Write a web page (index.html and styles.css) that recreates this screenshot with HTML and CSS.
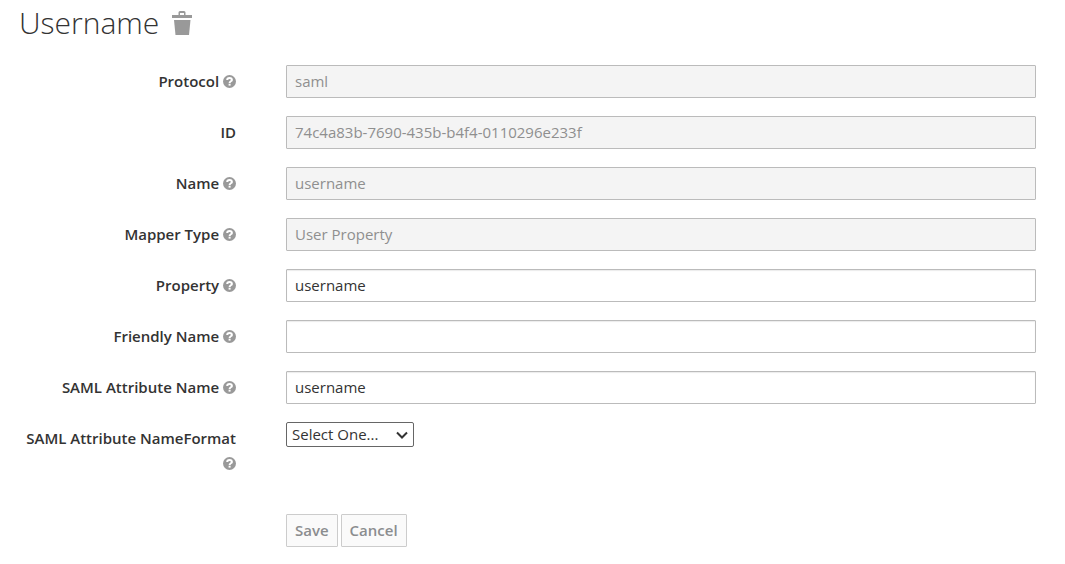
FILE: index.html
```html
<!DOCTYPE html>
<html lang="en">
<head>
  <meta charset="UTF-8">
  <meta name="viewport" content="width=device-width, initial-scale=1">
  <title>Username</title>
  <link rel="stylesheet" href="styles.css">
</head>
<body>

<!-- shared icons -->
<svg class="sprite" aria-hidden="true">
  <symbol id="help" viewBox="0 0 13 13">
    <circle cx="6.5" cy="6.5" r="6.5" fill="#999"/>
    <path d="M4.2 5.1C4.2 3.6 5.2 3 6.5 3S8.900 3.700 8.900 4.900C8.900 6.300 6.600 6.200 6.600 7.900" fill="none" stroke="#fff" stroke-width="2"/>
    <rect x="5.600" y="8.700" width="2" height="1.900" fill="#fff"/>
  </symbol>
</svg>

<main>
  <h1>
    Username
    <button class="delete" type="button" aria-label="Delete">
      <svg width="20" height="24" viewBox="0 0 20 24" fill="#999">
        <path d="M6.500 4V1.500Q6.500 0 8 0H12Q13.500 0 13.500 1.500V4H20V7H0V4ZM8 4H12V2H8Z" fill-rule="evenodd"/>
        <path d="M2 9H18.500L17 24H3.500Z"/>
      </svg>
    </button>
  </h1>

  <form>
    <div class="row">
      <label for="protocol">Protocol <svg class="help"><use href="#help"/></svg></label>
      <input type="text" id="protocol" value="saml" disabled>
    </div>
    <div class="row">
      <label for="mapperId">ID</label>
      <input type="text" id="mapperId" value="74c4a83b-7690-435b-b4f4-0110296e233f" disabled>
    </div>
    <div class="row">
      <label for="name">Name <svg class="help"><use href="#help"/></svg></label>
      <input type="text" id="name" value="username" disabled>
    </div>
    <div class="row">
      <label for="mapperType">Mapper Type <svg class="help"><use href="#help"/></svg></label>
      <input type="text" id="mapperType" value="User Property" disabled>
    </div>
    <div class="row">
      <label for="property">Property <svg class="help"><use href="#help"/></svg></label>
      <input type="text" id="property" value="username">
    </div>
    <div class="row">
      <label for="friendlyName">Friendly Name <svg class="help"><use href="#help"/></svg></label>
      <input type="text" id="friendlyName">
    </div>
    <div class="row">
      <label for="attributeName">SAML Attribute Name <svg class="help"><use href="#help"/></svg></label>
      <input type="text" id="attributeName" value="username">
    </div>
    <div class="row">
      <label for="nameFormat">SAML Attribute NameFormat <svg class="help"><use href="#help"/></svg></label>
      <div class="selectWrap">
        <select id="nameFormat">
          <option>Select One...</option>
          <option>Basic</option>
          <option>URI Reference</option>
          <option>Unspecified</option>
        </select>
        <svg class="chevron" viewBox="0 0 12 8"><path d="M1 1.500L6 6.500L11 1.500" fill="none" stroke="#333" stroke-width="2"/></svg>
      </div>
    </div>
    <div class="actions">
      <button type="submit" disabled>Save</button>
      <button type="button" disabled>Cancel</button>
    </div>
  </form>
</main>

</body>
</html>
```
FILE: styles.css
```css
* {
  box-sizing: border-box;
}

body {
  margin: 0;
  background: #fff;
  color: #333;
  font-family: "Open Sans", sans-serif;
  font-size: 15px;
  line-height: 25px;
}

.sprite {
  position: absolute;
  width: 0;
  height: 0;
}

main {
  padding: 3px 29px 16px 19px;
}

h1 {
  display: flex;
  align-items: center;
  gap: 13px;
  margin: 0 0 22px;
  font-size: 30px;
  font-weight: 300;
  line-height: 40px;
}

.delete {
  display: flex;
  padding: 0;
  border: none;
  background: none;
}

.row {
  display: grid;
  grid-template-columns: 217px 1fr;
  column-gap: 50px;
  align-items: start;
  margin-bottom: 18px;
}

label {
  padding-top: 4px;
  font-weight: 600;
  text-align: right;
}

.help {
  width: 13px;
  height: 13px;
  vertical-align: -1px;
}

input {
  width: 100%;
  height: 33px;
  padding: 1px 8px 2px;
  border: 1px solid #bbb;
  border-radius: 1px;
  background: #fff;
  box-shadow: inset 0 1px 1px rgba(0, 0, 0, 0.08);
  color: #333;
  font: inherit;
}

input:disabled {
  background: #f4f4f4;
  box-shadow: none;
  color: #8f8f8f;
}

.selectWrap {
  position: relative;
  justify-self: start;
  display: flex;
}

select {
  appearance: none;
  width: 128px;
  height: 25px;
  padding: 0 24px 0 5px;
  border: 1px solid #666;
  border-radius: 2px;
  background: #fff;
  color: #333;
  font: inherit;
  line-height: 23px;
}

.chevron {
  position: absolute;
  top: 9px;
  right: 6px;
  width: 12px;
  height: 8px;
  pointer-events: none;
}

.actions {
  display: flex;
  gap: 3px;
  margin: 38px 0 0 267px;
}

.actions button {
  height: 33px;
  padding: 0 8px;
  border: 1px solid #ccc;
  border-radius: 1px;
  background: #fafafa;
  color: #8b8d8f;
  font: inherit;
  font-weight: 600;
}
```
